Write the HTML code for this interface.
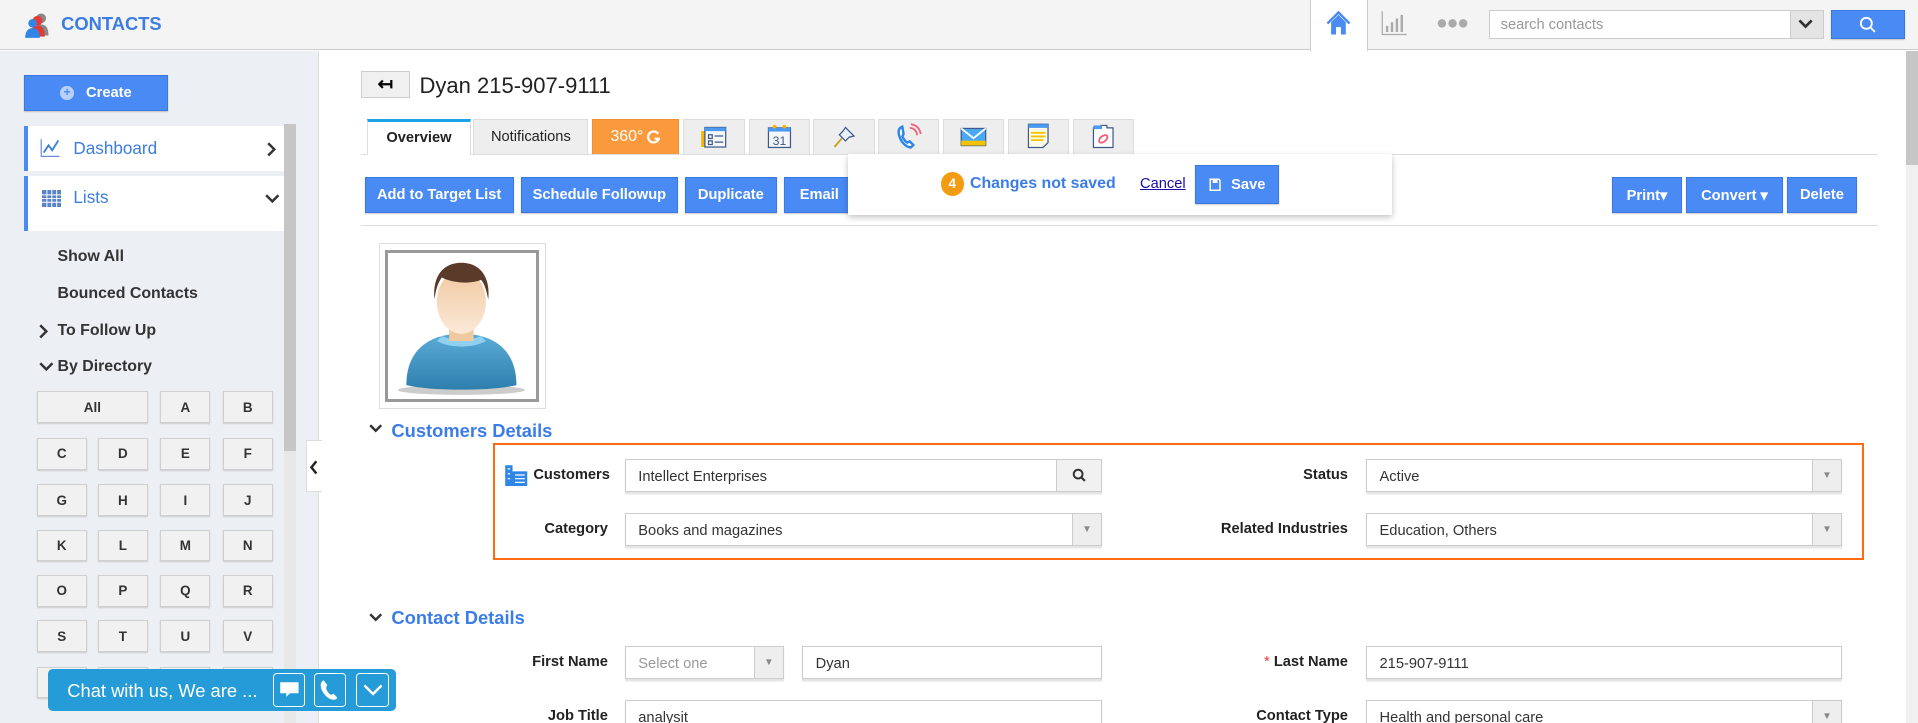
<!DOCTYPE html>
<html><head><meta charset="utf-8"><style>
*{box-sizing:border-box;margin:0;padding:0}
html,body{width:1918px;height:723px;overflow:hidden;background:#fff}
#w{zoom:1.2232;width:1568px;height:591px;position:relative;font-family:"Liberation Sans",Arial,sans-serif;overflow:hidden}
.a{position:absolute}
.btn{position:absolute;background:#4a8af4;border:1px solid #3b78e0;color:#fff;font-weight:bold;font-size:12px;display:flex;align-items:center;justify-content:center;box-shadow:0 1px 1px rgba(0,0,0,.2)}
.lt{position:absolute;width:41px;height:26px;background:#f1f1f1;border:1px solid #d0d0d0;box-shadow:0 1px 1px #ccc;font-size:11px;font-weight:bold;color:#333;display:flex;align-items:center;justify-content:center}
.side{position:absolute;left:47px;font-size:13px;font-weight:bold;color:#333}
.tab{position:absolute;top:97px;height:29px;background:#eee;border:1px solid #ddd;border-bottom:none;display:flex;align-items:center;justify-content:center;font-size:12px;color:#222}
.lab{position:absolute;font-size:12px;font-weight:bold;color:#222;text-align:right}
.inp{position:absolute;height:27px;border:1px solid #ccc;box-shadow:0 2px 1px #e4e4e4;font-size:12px;color:#333;padding-left:10px;padding-top:3px;display:flex;align-items:center;background:#fff}
.dd{position:absolute;right:0;top:0;bottom:0;width:24px;background:#eee;border-left:1px solid #ccc;color:#888;font-size:8px;display:flex;align-items:center;justify-content:center}
.sec{position:absolute;left:302px;font-size:15px;font-weight:bold;color:#3b7de8}
</style></head><body><div id="w">
<div class="a" style="left:0;top:0;width:1568px;height:41px;background:#f4f4f4;border-bottom:1px solid #ccc"></div>
<svg class="a" style="left:20px;top:9px" width="22" height="22" viewBox="0 0 22 22"><circle cx="14" cy="6" r="4" fill="#888"/><path d="M8 20c0-6 2-9 6-9s6 3 6 9z" fill="#888"/><circle cx="11" cy="8" r="4" fill="#e53935"/><path d="M5 21c0-6 2-9 6-9s6 3 6 9z" fill="#e53935"/><circle cx="7" cy="10" r="3.5" fill="#2f86e6"/><path d="M1 22c0-5 2-8 6-8s6 3 6 8z" fill="#2f86e6"/></svg>
<div class="a" style="left:50px;top:11px;font-size:15px;font-weight:bold;color:#3b7de0">CONTACTS</div>
<div class="a" style="left:1071px;top:0;width:47px;height:42px;background:#fff;border-left:1px solid #ccc;border-right:1px solid #ccc"></div>
<svg class="a" style="left:1083px;top:8px" width="22" height="22" viewBox="0 0 22 22"><path d="M2 11L11 2l9 9" stroke="#4a8af4" stroke-width="2" fill="none"/><path d="M5 10v10h4v-6h4v6h4V10L11 4z" fill="#4a8af4"/></svg>
<svg class="a" style="left:1129px;top:8px" width="22" height="22" viewBox="0 0 22 22"><path d="M1 1v19h20" stroke="#aaa" fill="none"/><path d="M5 18v-5M9 18v-8M13 18v-11M17 18v-14" stroke="#aaa" stroke-width="2"/></svg>
<div class="a" style="left:1174px;top:10px;font-size:16px;color:#aaa;letter-spacing:-1px">●●●</div>
<div class="a" style="left:1217px;top:8px;width:274px;height:24px;border:1px solid #ccc;background:#fff;font-size:12px;color:#999;padding:5px 9px">search contacts</div>
<div class="a" style="left:1463px;top:9px;width:27px;height:22px;background:#e4e4e4;border-left:1px solid #ccc"></div>
<svg class="a" style="left:1469px;top:15px" width="14" height="10"><path d="M2 2l5 5 5-5" stroke="#333" stroke-width="2.2" fill="none"/></svg>
<div class="btn" style="left:1497px;top:8px;width:60px;height:24px"><svg width="14" height="14"><circle cx="6" cy="6" r="4.5" stroke="#fff" stroke-width="1.5" fill="none"/><path d="M9 9l4 4" stroke="#fff" stroke-width="1.5"/></svg></div>
<div class="a" style="left:0;top:42px;width:261px;height:549px;background:#eceff4;border-right:1px solid #ddd"></div>
<div class="btn" style="left:20px;top:61px;width:117px;height:30px"><span style="display:inline-block;width:11px;height:11px;border-radius:50%;background:#b8d0fa;color:#4a8af4;font-size:10px;line-height:11px;text-align:center;margin-right:10px">+</span>Create</div>
<div class="a" style="left:20px;top:103px;width:212px;height:37px;background:#fff;border-left:4px solid #4a8af4"></div>
<svg class="a" style="left:33px;top:113px" width="17" height="16"><path d="M1 1v14h15" stroke="#6a8fd8" fill="none"/><path d="M3 12l4-6 3 4 5-8" stroke="#3b7de0" stroke-width="1.5" fill="none"/></svg>
<div class="a" style="left:60px;top:114px;font-size:14px;color:#3b7de0">Dashboard</div>
<svg class="a" style="left:218px;top:116px" width="8" height="12"><path d="M1 1l5 5-5 5" stroke="#333" stroke-width="2" fill="none"/></svg>
<div class="a" style="left:20px;top:144px;width:212px;height:45px;background:#fff;border-left:4px solid #4a8af4"></div>
<svg class="a" style="left:34px;top:155px" width="16" height="14"><rect width="16" height="14" fill="#5b84c8"/><path d="M0 4h16M0 7h16M0 10h16M4 0v14M8 0v14M12 0v14" stroke="#fff" stroke-width=".8"/></svg>
<div class="a" style="left:60px;top:154px;font-size:14px;color:#3b7de0">Lists</div>
<svg class="a" style="left:217px;top:159px" width="12" height="9"><path d="M1 1l5 5 5-5" stroke="#333" stroke-width="2" fill="none"/></svg>
<div class="a" style="left:232px;top:101px;width:10px;height:490px;background:#e8e8e8"></div>
<div class="a" style="left:232px;top:101px;width:10px;height:268px;background:#c6c6c6"></div>
<div class="side" style="top:203px">Show All</div>
<div class="side" style="top:233px">Bounced Contacts</div>
<div class="side" style="top:263px">To Follow Up</div>
<svg class="a" style="left:32px;top:265px" width="8" height="12"><path d="M1 1l5 5-5 5" stroke="#333" stroke-width="2" fill="none"/></svg>
<div class="side" style="top:293px">By Directory</div>
<svg class="a" style="left:32px;top:296px" width="12" height="9"><path d="M1 1l5 5 5-5" stroke="#333" stroke-width="2" fill="none"/></svg>
<div class="lt" style="left:30px;top:320px;width:91px">All</div><div class="lt" style="left:131px;top:320px">A</div><div class="lt" style="left:182px;top:320px">B</div>
<div class="lt" style="left:30px;top:358px">C</div><div class="lt" style="left:80px;top:358px">D</div><div class="lt" style="left:131px;top:358px">E</div><div class="lt" style="left:182px;top:358px">F</div>
<div class="lt" style="left:30px;top:396px">G</div><div class="lt" style="left:80px;top:396px">H</div><div class="lt" style="left:131px;top:396px">I</div><div class="lt" style="left:182px;top:396px">J</div>
<div class="lt" style="left:30px;top:433px">K</div><div class="lt" style="left:80px;top:433px">L</div><div class="lt" style="left:131px;top:433px">M</div><div class="lt" style="left:182px;top:433px">N</div>
<div class="lt" style="left:30px;top:470px">O</div><div class="lt" style="left:80px;top:470px">P</div><div class="lt" style="left:131px;top:470px">Q</div><div class="lt" style="left:182px;top:470px">R</div>
<div class="lt" style="left:30px;top:507px">S</div><div class="lt" style="left:80px;top:507px">T</div><div class="lt" style="left:131px;top:507px">U</div><div class="lt" style="left:182px;top:507px">V</div>
<div class="lt" style="left:30px;top:545px"></div><div class="lt" style="left:80px;top:545px"></div><div class="lt" style="left:131px;top:545px"></div><div class="lt" style="left:182px;top:545px"></div>
<div class="a" style="left:250px;top:360px;width:13px;height:42px;background:#fff;border:1px solid #ddd;border-right:none"></div>
<svg class="a" style="left:253px;top:376px" width="8" height="12"><path d="M6 1L2 6l4 5" stroke="#222" stroke-width="2" fill="none"/></svg>
<div class="a" style="left:39px;top:547px;width:285px;height:34px;background:#259cd8;border-radius:4px"></div>
<div class="a" style="left:55px;top:556px;font-size:15px;color:#fff">Chat with us, We are ...</div>
<div class="a" style="left:223px;top:550px;width:26px;height:28px;border:1px solid #fff;border-radius:3px"></div>
<svg class="a" style="left:228px;top:557px" width="17" height="14"><path d="M1 1h15v9H9l-3 3v-3H1z" fill="#fff"/></svg>
<div class="a" style="left:257px;top:550px;width:26px;height:28px;border:1px solid #fff;border-radius:3px"></div>
<svg class="a" style="left:262px;top:555px" width="16" height="18"><path d="M3 1c-2 1-3 3-2 7 2 5 6 9 10 9 2 0 3-1 3-2l-3-3-2 1c-2-1-4-4-4-6l1-2-3-4z" fill="#fff"/></svg>
<div class="a" style="left:291px;top:550px;width:27px;height:28px;border:1px solid #fff;border-radius:3px"></div>
<svg class="a" style="left:296px;top:558px" width="18" height="11"><path d="M2 2l7 7 7-7" stroke="#fff" stroke-width="2" fill="none"/></svg>
<div class="a" style="left:1558px;top:42px;width:10px;height:549px;background:#f0f0f0"></div>
<div class="a" style="left:1558px;top:42px;width:10px;height:93px;background:#c6c6c6"></div>
<div class="a" style="left:295px;top:58px;width:40px;height:22px;background:#f0f0f0;border:1px solid #ccc;font-size:15px;text-align:center;line-height:19px;font-weight:bold">↤</div>
<div class="a" style="left:343px;top:60px;font-size:18px;color:#222">Dyan 215-907-9111</div>
<div class="a" style="left:295px;top:126px;width:1240px;height:1px;background:#ddd"></div>
<div class="tab" style="left:300px;width:85px;background:#fff;border-top:3px solid #1aa3e8;height:30px;font-weight:bold">Overview</div>
<div class="tab" style="left:387px;width:94px">Notifications</div>
<div class="tab" style="left:484px;width:71px;background:#fb9a3c;border-color:#f09030;color:#fff;font-size:13px">360°<svg style="margin-left:2px" width="12" height="13"><path d="M10 4A4.5 4.5 0 1 0 10.5 8H7" stroke="#fff" stroke-width="1.8" fill="none"/></svg></div>
<div class="tab" style="left:558px;width:51px"><svg width="22" height="20"><rect x="1" y="5" width="4" height="13" fill="#f4b400"/><rect x="4" y="2" width="17" height="16" fill="#f4f6fa" stroke="#3d5a88"/><rect x="4" y="2" width="17" height="3" fill="#4a9af4"/><path d="M7 8h3v3H7zM7 13h3v3H7zM12 9h7M12 14h7" stroke="#3d5a88" fill="none"/></svg></div>
<div class="tab" style="left:612px;width:50px"><svg width="22" height="22"><rect x="2" y="4" width="18" height="16" fill="#f4f6fa" stroke="#3d5a88"/><rect x="2" y="4" width="18" height="3" fill="#4a9af4"/><circle cx="7" cy="3" r="1.5" fill="#f4b400"/><circle cx="15" cy="3" r="1.5" fill="#f4b400"/><text x="11" y="18" font-size="10" text-anchor="middle" fill="#3d5a88" font-family="Liberation Sans">31</text></svg></div>
<div class="tab" style="left:665px;width:50px"><svg width="20" height="20"><path d="M11 2l7 7-4 1-3 3-5-5 3-3z" fill="#e8f0fc" stroke="#3d5a88"/><path d="M8 11l-6 7" stroke="#c8a020" stroke-width="1.5"/></svg></div>
<div class="tab" style="left:718px;width:50px"><svg width="22" height="22"><path d="M6 3C3 4 2 7 4 12s6 8 9 8l2-2-3-3-2 1c-2-1-3-3-4-5l1-2-1-6z" fill="#fff" stroke="#2f86e6" stroke-width="2"/><path d="M12 4a6 6 0 0 1 6 6M13 1a9 9 0 0 1 8 8" stroke="#f06277" stroke-width="1.5" fill="none"/></svg></div>
<div class="tab" style="left:771px;width:50px"><svg width="22" height="18"><rect x="1" y="2" width="20" height="14" fill="#4aa8f4" stroke="#3d5a88"/><rect x="1" y="12" width="20" height="4" fill="#f4c400"/><path d="M1 2l10 8 10-8" stroke="#fff" stroke-width="1.5" fill="none"/></svg></div>
<div class="tab" style="left:824px;width:50px"><svg width="20" height="22"><path d="M2 1h16v15l-4 4H2z" fill="#fffbe6" stroke="#3d5a88"/><rect x="2" y="1" width="16" height="3" fill="#4a9af4"/><path d="M4 8h12M4 11h12M4 14h10" stroke="#f4c400" stroke-width="1.5"/></svg></div>
<div class="tab" style="left:877px;width:50px"><svg width="20" height="22"><path d="M2 4h6v-2h5v2h5v16H2z" fill="#fff" stroke="#3d5a88"/><rect x="2" y="2" width="7" height="3" fill="#4a9af4"/><ellipse cx="10" cy="13" rx="4" ry="2.3" transform="rotate(-40 10 13)" stroke="#f06277" stroke-width="1.5" fill="none"/></svg></div>
<div class="btn" style="left:298px;top:145px;width:122px;height:29px">Add to Target List</div>
<div class="btn" style="left:426px;top:145px;width:128px;height:29px">Schedule Followup</div>
<div class="btn" style="left:560px;top:145px;width:75px;height:29px">Duplicate</div>
<div class="btn" style="left:641px;top:145px;width:60px;height:29px;justify-content:flex-start;padding-left:12px">Email</div>
<div class="a" style="left:693px;top:126px;width:445px;height:50px;background:#fff;box-shadow:0 2px 5px rgba(0,0,0,.25)"></div>
<div class="a" style="left:769px;top:141px;width:19px;height:19px;border-radius:50%;background:#f39c12;color:#fff;font-size:11px;font-weight:bold;text-align:center;line-height:19px">4</div>
<div class="a" style="left:793px;top:143px;font-size:13px;font-weight:bold;color:#3b7de8">Changes not saved</div>
<div class="a" style="left:932px;top:144px;font-size:12px;color:#1a0dab;text-decoration:underline">Cancel</div>
<div class="btn" style="left:977px;top:135px;width:69px;height:32px"><svg width="10" height="11" style="margin-right:8px"><path d="M1 1h7l1 1v8H1z" fill="none" stroke="#fff" stroke-width="1.2"/><rect x="3" y="1" width="4" height="3" fill="#fff"/></svg>Save</div>
<div class="btn" style="left:1318px;top:145px;width:57px;height:29px">Print▾</div>
<div class="btn" style="left:1378px;top:145px;width:80px;height:29px">Convert ▾</div>
<div class="btn" style="left:1461px;top:145px;width:57px;height:29px">Delete</div>
<div class="a" style="left:295px;top:184px;width:1240px;height:1px;background:#ddd"></div>
<div class="a" style="left:310px;top:199px;width:136px;height:135px;border:1px solid #ddd;background:#fff"></div>
<div class="a" style="left:315px;top:204px;width:126px;height:125px;border:3px solid #999;background:#fff;overflow:hidden">
<svg width="120" height="119" viewBox="0 0 120 119"><defs><linearGradient id="f" x1="0" y1="0" x2="0" y2="1"><stop offset="0" stop-color="#f0c9a0"/><stop offset="1" stop-color="#fbe9d8"/></linearGradient><linearGradient id="b" x1="0" y1="0" x2="0" y2="1"><stop offset="0" stop-color="#5cacd8"/><stop offset="1" stop-color="#2f7fae"/></linearGradient></defs>
<ellipse cx="60" cy="112" rx="52" ry="4" fill="#ccc"/><path d="M15 108c0-30 20-42 45-42s45 12 45 42c-20 5-70 5-90 0z" fill="url(#b)"/><path d="M40 72c10 6 30 6 40 0l-4-4c-10 4-22 4-32 0z" fill="#8fd0f0"/><rect x="50" y="52" width="20" height="20" fill="#f0c9a0"/><ellipse cx="60" cy="40" rx="20" ry="26" fill="url(#f)"/><path d="M38 38c-2-20 8-30 22-30s24 10 22 30c-2-10-4-14-6-16-10 4-24 2-32-2-3 4-5 10-6 18z" fill="#5a3a28"/></svg></div>
<svg class="a" style="left:302px;top:347px" width="11" height="8"><path d="M1 1l4.5 4.5L10 1" stroke="#333" stroke-width="2" fill="none"/></svg>
<div class="sec" style="left:320px;top:343px">Customers Details</div>
<div class="a" style="left:403px;top:362px;width:1121px;height:96px;border:2px solid #ff6a13"></div>
<svg class="a" style="left:412px;top:379px" width="20" height="18"><rect x="1" y="1" width="6" height="17" fill="#2f86e6"/><rect x="6" y="6" width="13" height="12" fill="#2f86e6"/><path d="M3 4h2M3 8h2M3 12h2M9 9h8M9 12h8M9 15h8" stroke="#fff"/></svg>
<div class="lab" style="left:436px;top:382px">Customers</div>
<div class="inp" style="left:511px;top:375px;width:390px">Intellect Enterprises<div class="dd" style="width:37px;background:#f1f1f1"><svg width="12" height="12"><circle cx="5" cy="5" r="3.6" stroke="#333" stroke-width="1.6" fill="none"/><path d="M7.5 7.5l3 3" stroke="#333" stroke-width="1.8"/></svg></div></div>
<div class="lab" style="left:1000px;top:382px;width:102px">Status</div>
<div class="inp" style="left:1117px;top:375px;width:389px">Active<div class="dd">▼</div></div>
<div class="lab" style="left:400px;top:426px;width:97px">Category</div>
<div class="inp" style="left:511px;top:419px;width:390px">Books and magazines<div class="dd">▼</div></div>
<div class="lab" style="left:950px;top:426px;width:152px">Related Industries</div>
<div class="inp" style="left:1117px;top:419px;width:389px">Education, Others<div class="dd">▼</div></div>
<svg class="a" style="left:302px;top:501px" width="11" height="8"><path d="M1 1l4.5 4.5L10 1" stroke="#333" stroke-width="2" fill="none"/></svg>
<div class="sec" style="left:320px;top:496px">Contact Details</div>
<div class="lab" style="left:400px;top:535px;width:97px">First Name</div>
<div class="inp" style="left:511px;top:528px;width:130px;color:#999">Select one<div class="dd">▼</div></div>
<div class="inp" style="left:656px;top:528px;width:245px">Dyan</div>
<div class="lab" style="left:950px;top:535px;width:152px"><span style="color:#e53935;font-weight:normal">*</span> Last Name</div>
<div class="inp" style="left:1117px;top:528px;width:389px">215-907-9111</div>
<div class="lab" style="left:400px;top:579px;width:97px">Job Title</div>
<div class="inp" style="left:511px;top:572px;width:390px">analysit</div>
<div class="lab" style="left:950px;top:579px;width:152px">Contact Type</div>
<div class="inp" style="left:1117px;top:572px;width:389px">Health and personal care<div class="dd">▼</div></div>
</div></body></html>
